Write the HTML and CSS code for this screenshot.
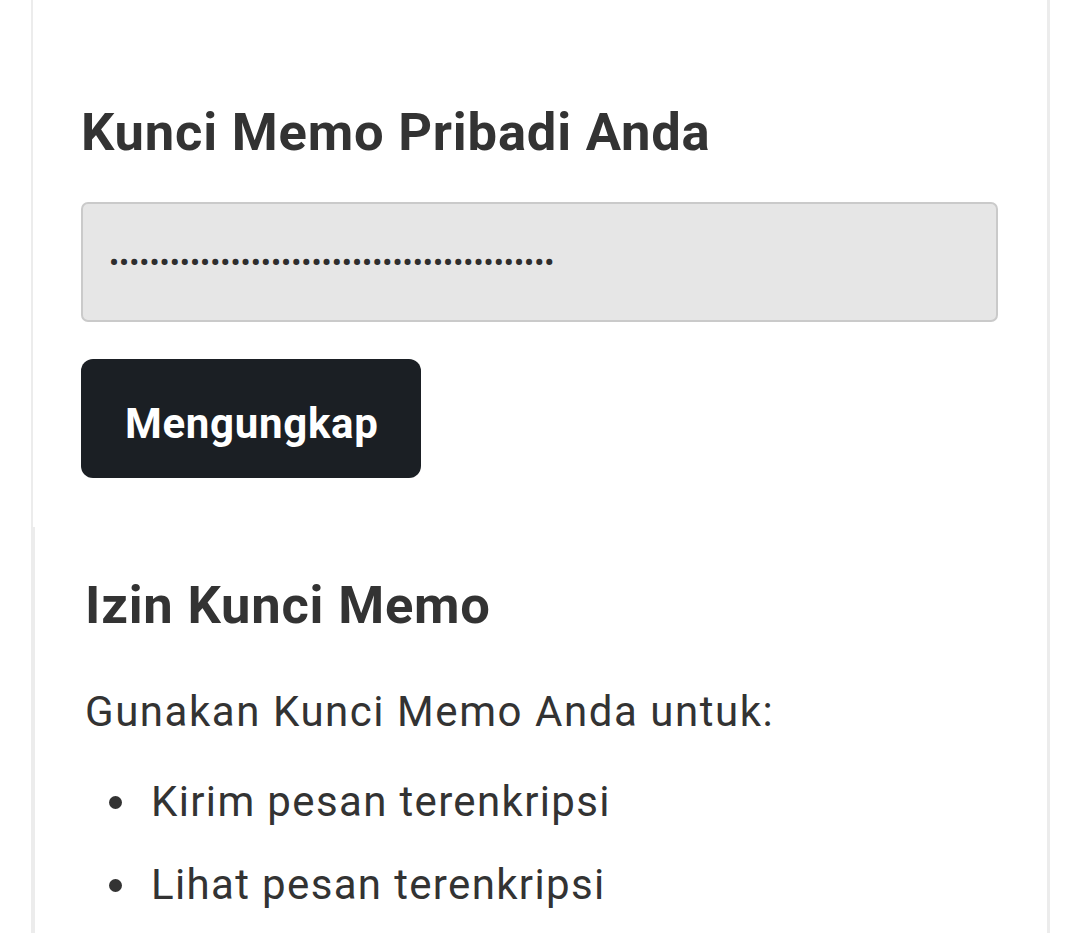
FILE: index.html
```html
<!DOCTYPE html>
<html lang="id">
<head>
<meta charset="utf-8">
<title>Kunci Memo</title>
<link rel="stylesheet" href="styles.css">
</head>
<body>
<div class="page">
  <section class="card">
    <h2 class="title">Kunci Memo Pribadi Anda</h2>
    <input class="key-input" type="password" value="ABCDEFGHIJKLMNOPQRSTUVWXYZabcdefghijklmnopqr" readonly>
    <button class="reveal-btn" type="button">Mengungkap</button>
  </section>
  <section class="perm">
    <h2 class="title">Izin Kunci Memo</h2>
    <p class="text">Gunakan Kunci Memo Anda untuk:</p>
    <ul class="list">
      <li>Kirim pesan terenkripsi</li>
      <li>Lihat pesan terenkripsi</li>
    </ul>
  </section>
</div>
</body>
</html>
```
FILE: styles.css
```css
html, body {
  margin: 0;
  padding: 0;
  background: #ffffff;
}
body {
  font-family: Roboto, "Liberation Sans", Arial, sans-serif;
  color: #333333;
  height: 933px;
  overflow: hidden;
}
.page {
  margin-left: 31px;
  width: 1019px;
  box-sizing: border-box;
  border-right: 3px solid #ececec;
  min-height: 933px;
  display: flex;
  flex-direction: column;
}
.card {
  border-left: 2px solid #ececec;
  padding: 101px 49px 49px 48px;
  display: flex;
  flex-direction: column;
  align-items: flex-start;
}
.title {
  margin: 0;
  font-size: 52.5px;
  line-height: 63px;
  font-weight: 700;
  letter-spacing: 0.8px;
  color: #333333;
}
.key-input {
  margin-top: 38px;
  width: 100%;
  height: 120px;
  box-sizing: border-box;
  border: 2px solid #cacaca;
  border-radius: 7px;
  background: #e6e6e6;
  padding: 0 26px;
  font-family: Roboto, "Liberation Sans", Arial, sans-serif;
  font-size: 30px;
  color: #2e2e2e;
  outline: none;
}
.reveal-btn {
  margin-top: 37px;
  background: #1b1f24;
  color: #ffffff;
  border: none;
  border-radius: 12px;
  padding: 33px 42px 23px 44px;
  font-family: Roboto, "Liberation Sans", Arial, sans-serif;
  font-size: 42px;
  line-height: 63px;
  font-weight: 700;
  letter-spacing: 0.7px;
}
.perm {
  flex: 1;
  border-left: 4px solid #ececec;
  padding: 47px 49px 0 50px;
}
.text {
  margin: 43px 0 0;
  font-size: 42px;
  line-height: 63px;
  letter-spacing: 1.55px;
}
.list {
  margin: 27px 0 0;
  padding-left: 24px;
  list-style: none;
  font-size: 42px;
  line-height: 63px;
  letter-spacing: 1.35px;
}
.list li::before {
  content: "";
  display: inline-block;
  width: 13px;
  height: 13px;
  border-radius: 50%;
  background: #333333;
  margin-right: 29px;
  vertical-align: 7px;
}
.list li + li {
  margin-top: 20px;
}
```
